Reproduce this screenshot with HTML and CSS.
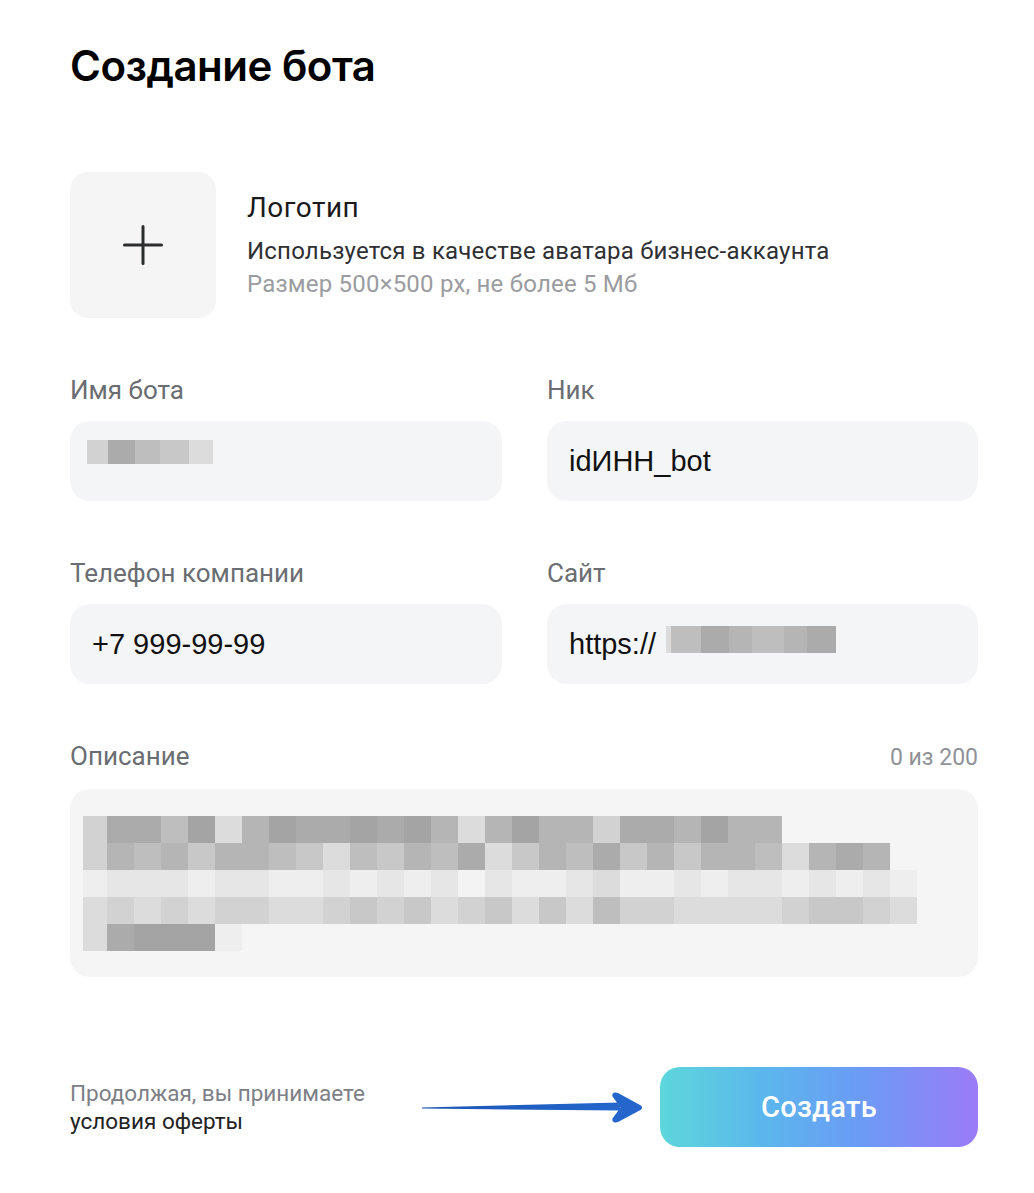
FILE: index.html
```html
<!DOCTYPE html>
<html lang="ru">
<head>
<meta charset="utf-8">
<title>Создание бота</title>
<link rel="stylesheet" href="styles.css">
</head>
<body>
<main class="page">
  <h1 class="title">Создание бота</h1>

  <section class="logo-row">
    <div class="logo-drop" role="button" aria-label="Загрузить логотип">
      <svg width="40" height="40" viewBox="0 0 40 40" aria-hidden="true">
        <path d="M20 1.5V38.5M1.5 20H38.5" stroke="#2c2d2e" stroke-width="3" stroke-linecap="round"/>
      </svg>
    </div>
    <div class="logo-info">
      <div class="logo-title">Логотип</div>
      <div class="logo-desc">Используется в качестве аватара бизнес-аккаунта</div>
      <div class="logo-hint">Размер 500×500 px, не более 5 Мб</div>
    </div>
  </section>

  <section class="grid">
    <div class="field">
      <div class="label">Имя бота</div>
      <div class="input">
        <span class="mosaic mosaic-name">
          <i class="c w21 f"></i><i class="c w27 b"></i><i class="c w25 d"></i><i class="c w29 e"></i><i class="c w24 g"></i>
        </span>
      </div>
    </div>
    <div class="field">
      <div class="label">Ник</div>
      <div class="input"><span>idИНН_bot</span></div>
    </div>
    <div class="field">
      <div class="label">Телефон компании</div>
      <div class="input"><span>+7 999-99-99</span></div>
    </div>
    <div class="field">
      <div class="label">Сайт</div>
      <div class="input">
        <span>https://</span>
        <span class="mosaic mosaic-site">
          <i class="c w5 g"></i><i class="c w30 d"></i><i class="c w28 b"></i><i class="c w23 c2"></i><i class="c w32 d"></i><i class="c w23 c2"></i><i class="c w29 b"></i>
        </span>
      </div>
    </div>
    <div class="field field-wide">
      <div class="label-row">
        <div class="label">Описание</div>
        <div class="counter">0 из 200</div>
      </div>
      <div class="textarea">
        <div class="mrow">
          <i class="c first f"></i><i class="c b"></i><i class="c b"></i><i class="c d"></i><i class="c a"></i><i class="c g"></i><i class="c c2"></i><i class="c a"></i><i class="c b"></i><i class="c b"></i><i class="c a"></i><i class="c b"></i><i class="c a"></i><i class="c c2"></i><i class="c g"></i><i class="c c2"></i><i class="c a"></i><i class="c c2"></i><i class="c c2"></i><i class="c f"></i><i class="c b"></i><i class="c b"></i><i class="c c2"></i><i class="c a"></i><i class="c c2"></i><i class="c c2"></i>
        </div>
        <div class="mrow">
          <i class="c first f"></i><i class="c c2"></i><i class="c d"></i><i class="c c2"></i><i class="c e"></i><i class="c c2"></i><i class="c c2"></i><i class="c d"></i><i class="c e"></i><i class="c g"></i><i class="c d"></i><i class="c e"></i><i class="c c2"></i><i class="c d"></i><i class="c b"></i><i class="c g"></i><i class="c e"></i><i class="c c2"></i><i class="c d"></i><i class="c b"></i><i class="c e"></i><i class="c c2"></i><i class="c e"></i><i class="c c2"></i><i class="c c2"></i><i class="c d"></i><i class="c g"></i><i class="c c2"></i><i class="c b"></i><i class="c c2"></i>
        </div>
        <div class="mrow">
          <i class="c first i"></i><i class="c h"></i><i class="c h"></i><i class="c h"></i><i class="c i"></i><i class="c h"></i><i class="c h"></i><i class="c i"></i><i class="c i"></i><i class="c h"></i><i class="c i"></i><i class="c h"></i><i class="c i"></i><i class="c h"></i><i class="c j"></i><i class="c h"></i><i class="c i"></i><i class="c i"></i><i class="c h"></i><i class="c g"></i><i class="c i"></i><i class="c i"></i><i class="c h"></i><i class="c i"></i><i class="c h"></i><i class="c h"></i><i class="c i"></i><i class="c h"></i><i class="c i"></i><i class="c h"></i><i class="c i"></i>
        </div>
        <div class="mrow">
          <i class="c first g"></i><i class="c f"></i><i class="c g"></i><i class="c f"></i><i class="c g"></i><i class="c f"></i><i class="c f"></i><i class="c g"></i><i class="c g"></i><i class="c f"></i><i class="c e"></i><i class="c f"></i><i class="c e"></i><i class="c g"></i><i class="c f"></i><i class="c e"></i><i class="c g"></i><i class="c e"></i><i class="c g"></i><i class="c d"></i><i class="c f"></i><i class="c f"></i><i class="c g"></i><i class="c g"></i><i class="c g"></i><i class="c g"></i><i class="c f"></i><i class="c e"></i><i class="c e"></i><i class="c f"></i><i class="c g"></i>
        </div>
        <div class="mrow">
          <i class="c first g"></i><i class="c b"></i><i class="c a"></i><i class="c a"></i><i class="c a"></i><i class="c i"></i>
        </div>
      </div>
    </div>
  </section>

  <section class="footer">
    <div class="terms">
      <div class="terms-muted">Продолжая, вы принимаете</div>
      <div class="terms-link">условия оферты</div>
    </div>
    <svg class="arrow" width="224" height="36" viewBox="0 0 224 36" aria-hidden="true">
      <defs>
        <linearGradient id="ag" x1="0" y1="0" x2="1" y2="0">
          <stop offset="0" stop-color="#1a55b5"/>
          <stop offset="1" stop-color="#2466cc"/>
        </linearGradient>
      </defs>
      <path d="M2 18.4 L200 13.4 L200 21.4 L2 19.6 Z" fill="url(#ag)"/>
      <path d="M192.5 7.5 C191.5 4 195 2.5 198.5 4.3 L220 16 C222.8 17.4 222.8 19.8 220 21.2 L198.5 32.7 C195 34.5 191.5 33 192.5 29.5 L200.5 18.6 Z" fill="#2466cc"/>
    </svg>
    <button class="create">Создать</button>
  </section>
</main>
</body>
</html>
```

FILE: styles.css
```css
* { box-sizing: border-box; }

body {
  margin: 0;
  background: #ffffff;
  font-family: Roboto, "Noto Sans", sans-serif;
  color: #1f1f1f;
}

.page {
  width: 1034px;
  padding: 41px 56px 0 70px;
}

.title {
  margin: 0;
  font-family: Inter, "Noto Sans", sans-serif;
  font-weight: 600;
  font-size: 42px;
  line-height: 50px;
  color: #000;
  letter-spacing: -0.5px;
}

.logo-row {
  display: flex;
  gap: 31px;
  margin-top: 81px;
  width: 908px;
}

.logo-drop {
  width: 146px;
  height: 146px;
  flex: none;
  border-radius: 18px;
  background: #f5f5f6;
  display: flex;
  align-items: center;
  justify-content: center;
}

.logo-info {
  padding-top: 21px;
  display: flex;
  flex-direction: column;
}

.logo-title {
  font-size: 28px;
  line-height: 30px;
  letter-spacing: 0.5px;
  color: #1a1a1a;
}

.logo-desc {
  margin-top: 12px;
  font-size: 24px;
  line-height: 33px;
  letter-spacing: 0.2px;
  color: #2f3033;
}

.logo-hint {
  font-size: 24px;
  line-height: 33px;
  letter-spacing: 0.2px;
  color: #9a9ca0;
}

.grid {
  margin-top: 59px;
  width: 908px;
  display: grid;
  grid-template-columns: 432px 431px;
  column-gap: 45px;
  row-gap: 59px;
}

.field-wide { grid-column: 1 / -1; }

.label {
  font-size: 26px;
  line-height: 26px;
  color: #6a6d72;
}

.label-row {
  display: flex;
  justify-content: space-between;
  align-items: baseline;
}

.counter {
  font-size: 23px;
  line-height: 26px;
  color: #8f9297;
}

.input {
  margin-top: 18px;
  height: 80px;
  border-radius: 20px;
  background: #f4f5f7;
  display: flex;
  align-items: center;
  padding: 0 22px;
  font-family: "Liberation Sans", Arial, sans-serif;
  font-size: 29px;
  color: #111;
}

.textarea {
  margin-top: 18px;
  height: 188px;
  border-radius: 20px;
  background: #f5f5f6;
  padding: 27px 0 0 13px;
}

.mosaic { display: flex; }

.mosaic-name {
  align-self: flex-start;
  margin: 19px 0 0 -5px;
  height: 24px;
}

.mosaic-site {
  height: 27px;
  margin: 0 0 9px 10px;
}

.mrow { display: flex; height: 27px; }

.c { display: block; width: 27px; height: 100%; }
.c.first { width: 24px; }
.w5 { width: 5px; }
.w21 { width: 21px; }
.w23 { width: 23px; }
.w24 { width: 24px; }
.w25 { width: 25px; }
.w27 { width: 27px; }
.w28 { width: 28px; }
.w29 { width: 29px; }
.w30 { width: 30px; }
.w32 { width: 32px; }

.a { background: #a4a4a4; }
.b { background: #ababab; }
.c2 { background: #b5b5b5; }
.d { background: #bebebe; }
.e { background: #c8c8c8; }
.f { background: #d2d2d2; }
.g { background: #dcdcdc; }
.h { background: #e6e6e6; }
.i { background: #eeeeee; }
.j { background: #f3f3f3; }

.footer {
  margin-top: 90px;
  width: 908px;
  display: flex;
  align-items: center;
}

.terms {
  font-size: 22.5px;
  line-height: 28px;
}

.terms-muted { color: #7d8086; }
.terms-link { color: #222; }

.arrow {
  margin-left: auto;
  margin-right: 16px;
  flex: none;
}

.create {
  width: 318px;
  height: 80px;
  flex: none;
  border: 0;
  border-radius: 20px;
  background: linear-gradient(90deg, #5dd7db 0%, #5bb7ec 32%, #6a9cf5 62%, #9b7bf8 100%);
  color: #fff;
  font-family: Roboto, "Noto Sans", sans-serif;
  font-weight: 500;
  font-size: 29px;
  letter-spacing: 0.3px;
}
```
